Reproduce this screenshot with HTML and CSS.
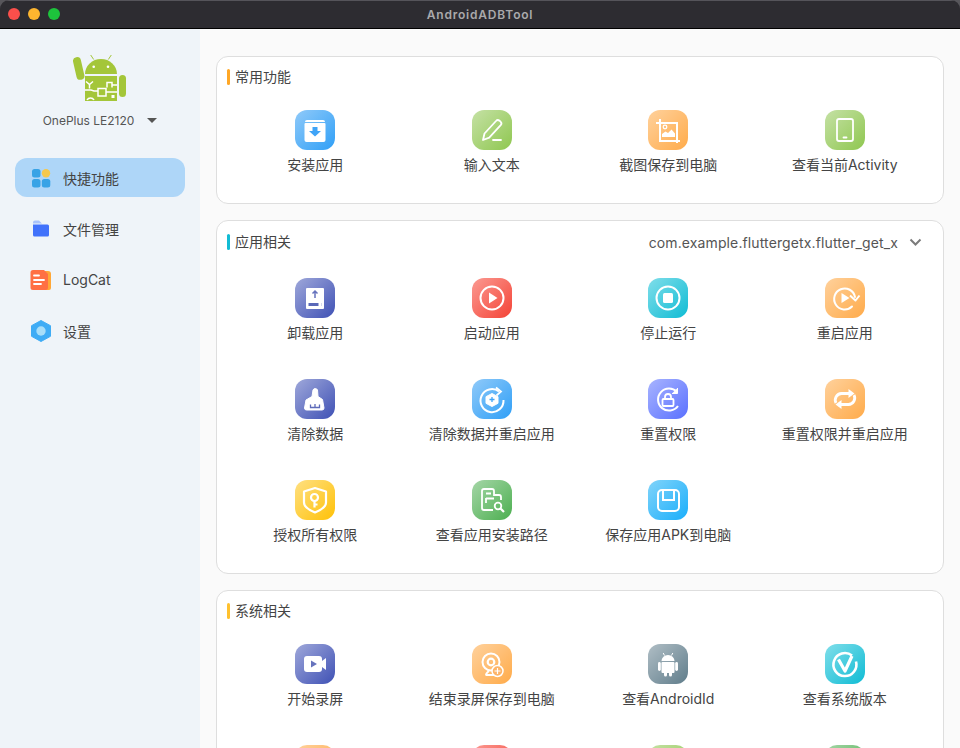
FILE: index.html
```html
<!DOCTYPE html>
<html lang="zh-CN">
<head>
  <meta charset="UTF-8" />
  <title>AndroidADBTool</title>
  <link rel="stylesheet" href="styles.css">
</head>
<body>
<div class="window">
  <header class="titlebar">
    <div class="lights"><i class="light red"></i><i class="light yellow"></i><i class="light green"></i></div>
    <div class="title">AndroidADBTool</div>
    <div></div>
  </header>
  <div class="app">
    <aside class="sidebar">
      <svg class="logo" width="54" height="48" viewBox="0 0 54 48" fill="#a4c639">
        <rect x="1.600" y="3" width="8" height="23" rx="4" transform="rotate(-13 5.600 14)"/>
        <rect x="46" y="21" width="7" height="22" rx="3.500"/>
        <path d="M12 20a16 15 0 0 1 32 0z"/>
        <path d="M17.700 1l3 4.500M38.300 1l-3 4.500" stroke="#a4c639" stroke-width="1"/>
        <rect x="12" y="22" width="32" height="25"/>
        <circle cx="20.700" cy="12.700" r="1.300" fill="#fff"/><circle cx="35" cy="12.700" r="1.300" fill="#fff"/>
        <g fill="none" stroke="#fff" stroke-width="1.500">
          <path d="M13 27.500l3.500 3 3.500-3M16.500 30.500v4"/>
          <path d="M12 36h6l3 1h4"/>
          <rect x="25" y="34.500" width="8" height="7.500"/>
          <path d="M33 38h11"/>
          <path d="M34 33.500v-5h5v5M39 31h5"/>
          <path d="M14 46a4 4 0 0 1 7 0"/>
        </g>
        <rect x="38.500" y="41" width="3" height="3" fill="#fff"/>
      </svg>
      <div class="device"><span>OnePlus LE2120</span><i class="caret"></i></div>
      <nav class="menu">
        <a class="menu-item active">
          <span class="menu-icon"><svg width="20" height="20" viewBox="0 0 20 20"><rect x="1" y="1" width="8.500" height="8.500" rx="2.500" fill="#38a3e6"/><circle cx="15" cy="5.200" r="4.200" fill="#f5c84c"/><rect x="1" y="11" width="8.500" height="8.500" rx="2.500" fill="#38a3e6"/><rect x="10.800" y="11" width="8.500" height="8.500" rx="2.500" fill="#38a3e6"/></svg></span>
          快捷功能
        </a>
        <a class="menu-item">
          <span class="menu-icon"><svg width="20" height="20" viewBox="0 0 20 20"><path d="M2 3.500a2 2 0 0 1 2-2h4l3 3H2z" fill="#a9c3fb"/><path d="M2 5.500h14.500a1.500 1.500 0 0 1 1.500 1.500v9a1.500 1.500 0 0 1-1.500 1.500h-13a1.500 1.500 0 0 1-1.500-1.500z" fill="#4172fb"/></svg></span>
          文件管理
        </a>
        <a class="menu-item">
          <span class="menu-icon"><svg width="22" height="22" viewBox="0 0 22 22"><path d="M14 2h4a3 3 0 0 1 3 3v14a2 2 0 0 1-2 2h-5z" fill="#ffa736"/><path d="M3 1h11l4 4v13.500a2.500 2.500 0 0 1-2.500 2.500h-12.500a2.500 2.500 0 0 1-2.500-2.500v-15a2.500 2.500 0 0 1 2.500-2.500z" fill="#ff7043"/><path d="M4 6.500h5M4 11h10M4 15h7" stroke="#fff" stroke-width="1.800" stroke-linecap="round"/></svg></span>
          LogCat
        </a>
        <a class="menu-item">
          <span class="menu-icon"><svg width="20" height="22" viewBox="0 0 20 22"><path d="M10 .500l9.500 5.200v10.600l-9.500 5.200-9.500-5.200v-10.600z" fill="#3facf5" stroke="#3facf5" stroke-linejoin="round"/><circle cx="10" cy="11" r="4.700" fill="#a8def9"/></svg></span>
          设置
        </a>
      </nav>
    </aside>

    <main class="content">
      <section class="card">
        <div class="card-head"><h3 class="heading bar-orange">常用功能</h3></div>
        <div class="grid">
          <div class="tool"><div class="tile blue">
            <svg viewBox="0 0 40 40"><path d="M10.500 13h19a1 1 0 0 1 1 1v16a2 2 0 0 1-2 2h-17a2 2 0 0 1-2-2v-16a1 1 0 0 1 1-1z" fill="#fff"/><path d="M12 10h16a2 2 0 0 1 2 2h-20a2 2 0 0 1 2-2z" fill="#fff"/><path d="M17.500 17h5v4h3.500l-6 5.500-6-5.500h3.500z" fill="#3fa4f7"/></svg>
          </div><span>安装应用</span></div>
          <div class="tool"><div class="tile green">
            <svg viewBox="0 0 40 40" fill="none" stroke="#fff" stroke-width="1.800" stroke-linejoin="round" stroke-linecap="round"><path d="M11 30l1.500-6.500 11.500-12.500a2.500 2.500 0 0 1 3.500-.300l1 .900a2.500 2.500 0 0 1 .200 3.500l-11.500 12.500z"/><path d="M21 30h8"/></svg>
          </div><span>输入文本</span></div>
          <div class="tool"><div class="tile orange">
            <svg viewBox="0 0 40 40" fill="none" stroke="#fff" stroke-width="2"><path d="M8 13h21v20M12 9v22h20"/><circle cx="17" cy="17" r="1.800" stroke-width="1.300"/><path d="M14 27v-3l3.500-2.500 2.500 1.500 3.500-3.500 3.500 4v3.500z" fill="#fff" stroke="none"/></svg>
          </div><span>截图保存到电脑</span></div>
          <div class="tool"><div class="tile green">
            <svg viewBox="0 0 40 40" fill="none" stroke="#fff" stroke-width="1.800"><rect x="12" y="9" width="16" height="22" rx="2"/><path d="M18.500 27.500h3" stroke-linecap="round"/></svg>
          </div><span>查看当前Activity</span></div>
        </div>
      </section>

      <section class="card">
        <div class="card-head tall">
          <h3 class="heading bar-cyan">应用相关</h3>
          <div class="picker"><span>com.example.fluttergetx.flutter_get_x</span>
            <svg width="13" height="8" viewBox="0 0 13 8"><path d="M1.500 1.500l5 5 5-5" fill="none" stroke="#7b7b7b" stroke-width="2"/></svg>
          </div>
        </div>
        <div class="grid">
          <div class="tool"><div class="tile indigo">
            <svg viewBox="0 0 40 40"><rect x="11" y="10" width="18" height="21" fill="#fff" rx="1"/><path d="M20 20v-7M17.500 15.500l2.500-2.500 2.500 2.500" fill="none" stroke="#6673bd" stroke-width="1.500"/><rect x="13.500" y="25" width="13" height="3" fill="#5a68b8"/><rect x="23.500" y="25" width="3" height="3" fill="#fff"/></svg>
          </div><span>卸载应用</span></div>
          <div class="tool"><div class="tile red">
            <svg viewBox="0 0 40 40"><circle cx="20" cy="20" r="11.500" fill="none" stroke="#fff" stroke-width="2"/><path d="M17 14.500l8.500 5.500-8.500 5.500z" fill="#fff"/></svg>
          </div><span>启动应用</span></div>
          <div class="tool"><div class="tile cyan">
            <svg viewBox="0 0 40 40"><circle cx="20" cy="20" r="11.500" fill="none" stroke="#fff" stroke-width="2"/><rect x="15" y="15" width="10" height="10" rx="1.500" fill="#fff"/></svg>
          </div><span>停止运行</span></div>
          <div class="tool"><div class="tile orange">
            <svg viewBox="0 0 40 40" fill="none" stroke="#fff" stroke-width="2"><path d="M30 19a10.500 10.500 0 1 0-3 9.500" stroke-linecap="round"/><path d="M25 17.500l5.500 5 4-5" stroke-linejoin="round"/><path d="M16.500 15l8 5-8 5z" fill="#fff" stroke="none"/></svg>
          </div><span>重启应用</span></div>

          <div class="tool"><div class="tile indigo">
            <svg viewBox="0 0 40 40"><path d="M18 11a2.500 2.500 0 0 1 4.500 0l.500 6.500 4.500 3 1.500 8.500a2 2 0 0 1-2 2h-15.500a2 2 0 0 1-2-2l1.500-8 6-3.500z" fill="#fff" stroke="#fff" stroke-linejoin="round"/><path d="M15.500 25.500v3h9v-3M20 25v3.500" fill="none" stroke="#5e6bb9" stroke-width="1.300"/></svg>
          </div><span>清除数据</span></div>
          <div class="tool"><div class="tile blue">
            <svg viewBox="0 0 40 40" fill="none" stroke="#fff"><path d="M27 12.500a11.500 11.500 0 1 0 4.500 8.500" stroke-width="2"/><path d="M24 8.500l5 4-4.500 4" stroke-width="1.800"/><path d="M20 14.500l6 3.200v6.600l-6 3.200-6-3.200v-6.600z" fill="#fff" stroke-linejoin="round"/><path d="M17.500 20.500h5M20 18v5" stroke="#3fa4f7" stroke-width="1.300"/></svg>
          </div><span>清除数据并重启应用</span></div>
          <div class="tool"><div class="tile periwinkle">
            <svg viewBox="0 0 40 40" fill="none" stroke="#fff" stroke-width="2"><path d="M30 27a11 11 0 1 1-1-14"/><path d="M29.500 9v5.500h-5.500" fill="#fff" stroke-width="1"/><path d="M17 20v-2a3 3 0 0 1 6 0v2" stroke-width="1.800"/><rect x="14.500" y="20" width="11" height="7" rx="1" stroke-width="1.800"/></svg>
          </div><span>重置权限</span></div>
          <div class="tool"><div class="tile orange">
            <svg viewBox="0 0 40 40" fill="none" stroke="#fff" stroke-width="2.800"><path d="M11 24a6.500 6.500 0 0 1 5.500-9.500h8"/><path d="M29 16a6.500 6.500 0 0 1-5.500 9.500h-8"/><path d="M23.500 10l6 4.500-6 4.500z" fill="#fff" stroke="none"/><path d="M16.500 21l-6 4.500 6 4.500z" fill="#fff" stroke="none"/></svg>
          </div><span>重置权限并重启应用</span></div>

          <div class="tool"><div class="tile yellow">
            <svg viewBox="0 0 40 40" fill="none" stroke="#fff" stroke-width="2.200"><path d="M20 8l11 3.500v11c0 4-5 7.500-11 10-6-2.500-11-6-11-10v-11z" stroke-linejoin="round"/><circle cx="19.500" cy="17.500" r="3.500"/><path d="M19.500 21v6.500M19.500 24.500h3"/></svg>
          </div><span>授权所有权限</span></div>
          <div class="tool"><div class="tile leaf">
            <svg viewBox="0 0 40 40" fill="none" stroke="#fff" stroke-width="1.800"><path d="M21 30h-9a2 2 0 0 1-2-2v-17a2 2 0 0 1 2-2h8a2 2 0 0 1 2 2v4h5a2 2 0 0 1 2 2v3"/><path d="M14 13.500h5M14 18.500h8"/><path d="M14 23v-5"/><circle cx="26" cy="26" r="3.300"/><path d="M28.500 28.500l3.500 3.500" stroke-width="2.200"/></svg>
          </div><span>查看应用安装路径</span></div>
          <div class="tool"><div class="tile sky">
            <svg viewBox="0 0 40 40" fill="none" stroke="#fff" stroke-width="2"><rect x="10" y="10" width="21" height="21" rx="4"/><path d="M15 10v10h11v-10"/></svg>
          </div><span>保存应用APK到电脑</span></div>
        </div>
      </section>

      <section class="card">
        <div class="card-head"><h3 class="heading bar-yellow">系统相关</h3></div>
        <div class="grid">
          <div class="tool"><div class="tile indigo">
            <svg viewBox="0 0 40 40"><rect x="9" y="12" width="18" height="16" rx="3" fill="#fff"/><path d="M27 17l4-3v12l-4-3z" fill="#fff"/><path d="M16 16.500l6 3.500-6 3.500z" fill="#6673bd"/></svg>
          </div><span>开始录屏</span></div>
          <div class="tool"><div class="tile orange">
            <svg viewBox="0 0 40 40" fill="none" stroke="#fff" stroke-width="2"><circle cx="19" cy="18" r="8.500"/><circle cx="19" cy="18" r="3.300" stroke-width="2.200"/><path d="M14 31.500c0-2 1.500-3.500 3-4.500"/><path d="M14 31h11"/><circle cx="25.500" cy="27" r="5.500" fill="#fdb468" stroke-width="1.500"/><path d="M22.500 27h6M25.500 24v6" stroke-width="1.200"/></svg>
          </div><span>结束录屏保存到电脑</span></div>
          <div class="tool"><div class="tile slate">
            <svg viewBox="0 0 40 40" fill="#fff"><path d="M13.500 17a6.500 6 0 0 1 13 0z"/><path d="M16.500 11.500l-1.300-2.500M23.500 11.500l1.300-2.500" stroke="#fff"/><rect x="13.500" y="18" width="13" height="11" rx="1"/><rect x="10" y="18" width="2.800" height="9" rx="1.400"/><rect x="27.200" y="18" width="2.800" height="9" rx="1.400"/><rect x="16" y="27" width="3" height="5.500" rx="1.500"/><rect x="21" y="27" width="3" height="5.500" rx="1.500"/></svg>
          </div><span>查看AndroidId</span></div>
          <div class="tool"><div class="tile cyan">
            <svg viewBox="0 0 40 40" fill="none" stroke="#fff"><path d="M27 11.500a11.500 11.500 0 1 0 4 6" stroke-width="2.600"/><path d="M13.500 15.500l6.500 11.500 7-15" stroke-width="3.200" stroke-linejoin="round"/></svg>
          </div><span>查看系统版本</span></div>

          <div class="tool cut"><div class="tile orange"></div></div>
          <div class="tool cut"><div class="tile red"></div></div>
          <div class="tool cut"><div class="tile green"></div></div>
          <div class="tool cut"><div class="tile leaf"></div></div>
        </div>
      </section>
    </main>
  </div>
</div>
</body>
</html>
```

FILE: styles.css
```css
* { box-sizing: border-box; }
html, body { margin: 0; height: 100%; overflow: hidden; background: #57565b; }
body { font-family: Inter, "Noto Sans CJK SC", sans-serif; font-size: 14px; color: #444; }

.window { height: 748px; display: flex; flex-direction: column; border-radius: 9px 9px 0 0; overflow: hidden; }

.titlebar { flex: none; height: 29px; display: grid; grid-template-columns: 1fr auto 1fr; align-items: center; background: #2d2c31; border-top: 1px solid #55545a; border-bottom: 1px solid #000; padding-bottom: 1px; }
.lights { display: flex; gap: 8px; padding-left: 8px; }
.light { width: 12px; height: 12px; border-radius: 50%; }
.light.red { background: #fb4f4b; }
.light.yellow { background: #fdb52f; }
.light.green { background: #1dc43c; }
.title { font-size: 12px; font-weight: 600; color: #a9a9ab; letter-spacing: .8px; }

.app { flex: 1; display: flex; min-height: 0; }

.sidebar { flex: none; width: 200px; background: #eff4f9; padding: 25px 15px 0; display: flex; flex-direction: column; align-items: center; }
.logo { flex: none; }
.device { margin-top: 8px; height: 20px; display: flex; align-items: center; gap: 13px; font-size: 12px; color: #555; }
.caret { width: 0; height: 0; border-left: 5.5px solid transparent; border-right: 5.5px solid transparent; border-top: 5.5px solid #555; }

.menu { align-self: stretch; margin-top: 28px; display: flex; flex-direction: column; gap: 12px; }
.menu-item { height: 39px; display: flex; align-items: center; gap: 11px; padding-left: 15px; border-radius: 12px; color: #444; }
.menu-icon { flex: none; width: 22px; height: 22px; display: flex; align-items: center; justify-content: center; }
.menu-item.active { background: #aed6f8; }

.content { flex: 1; min-width: 0; background: #fafafa; padding: 27px 16px 0; display: flex; flex-direction: column; gap: 16px; }

.card { flex: none; background: #fff; border: 1px solid #dedede; border-radius: 12px; padding: 10px; }
.card-head { height: 20px; margin-bottom: 5px; display: flex; align-items: center; justify-content: space-between; }
.card-head.tall { height: 22px; margin-bottom: 7px; }

.heading { margin: 0; font-size: 14px; font-weight: 400; line-height: 20px; padding-left: 8px; position: relative; }
.heading::before { content: ""; position: absolute; left: 0; top: 2px; width: 3px; height: 16px; border-radius: 2px; }
.bar-orange::before { background: #ffa726; }
.bar-cyan::before { background: #12bcd4; }
.bar-yellow::before { background: #ffc12e; }

.picker { display: flex; align-items: center; gap: 11px; padding-right: 11px; font-size: 14px; color: #555; letter-spacing: .12px; }

.grid { display: grid; grid-template-columns: repeat(4, 1fr); grid-auto-rows: 101px; }
.tool { display: flex; flex-direction: column; align-items: center; justify-content: center; gap: 5px; }
.tool.cut { justify-content: flex-start; padding-top: 18px; }
.tool span { line-height: 20px; font-size: 14px; color: #444; white-space: nowrap; }

.tile { flex: none; width: 40px; height: 40px; border-radius: 12px; }
.tile svg { display: block; width: 40px; height: 40px; }
.blue { background: linear-gradient(135deg, #90caf9, #2f9ff7); }
.green { background: linear-gradient(135deg, #c5e1a5, #8fc750); }
.orange { background: linear-gradient(135deg, #ffd19c, #ffab4a); }
.indigo { background: linear-gradient(135deg, #9fa8da, #3f51b5); }
.red { background: linear-gradient(135deg, #fb9a92, #f44336); }
.cyan { background: linear-gradient(135deg, #80deea, #0fbcd4); }
.periwinkle { background: linear-gradient(135deg, #a8b4ff, #5a70ff); }
.yellow { background: linear-gradient(135deg, #ffe082, #ffc107); }
.leaf { background: linear-gradient(135deg, #a5d6a7, #4caf50); }
.sky { background: linear-gradient(135deg, #81d4fa, #1aaefb); }
.slate { background: linear-gradient(135deg, #b0bec5, #607d8b); }
```
